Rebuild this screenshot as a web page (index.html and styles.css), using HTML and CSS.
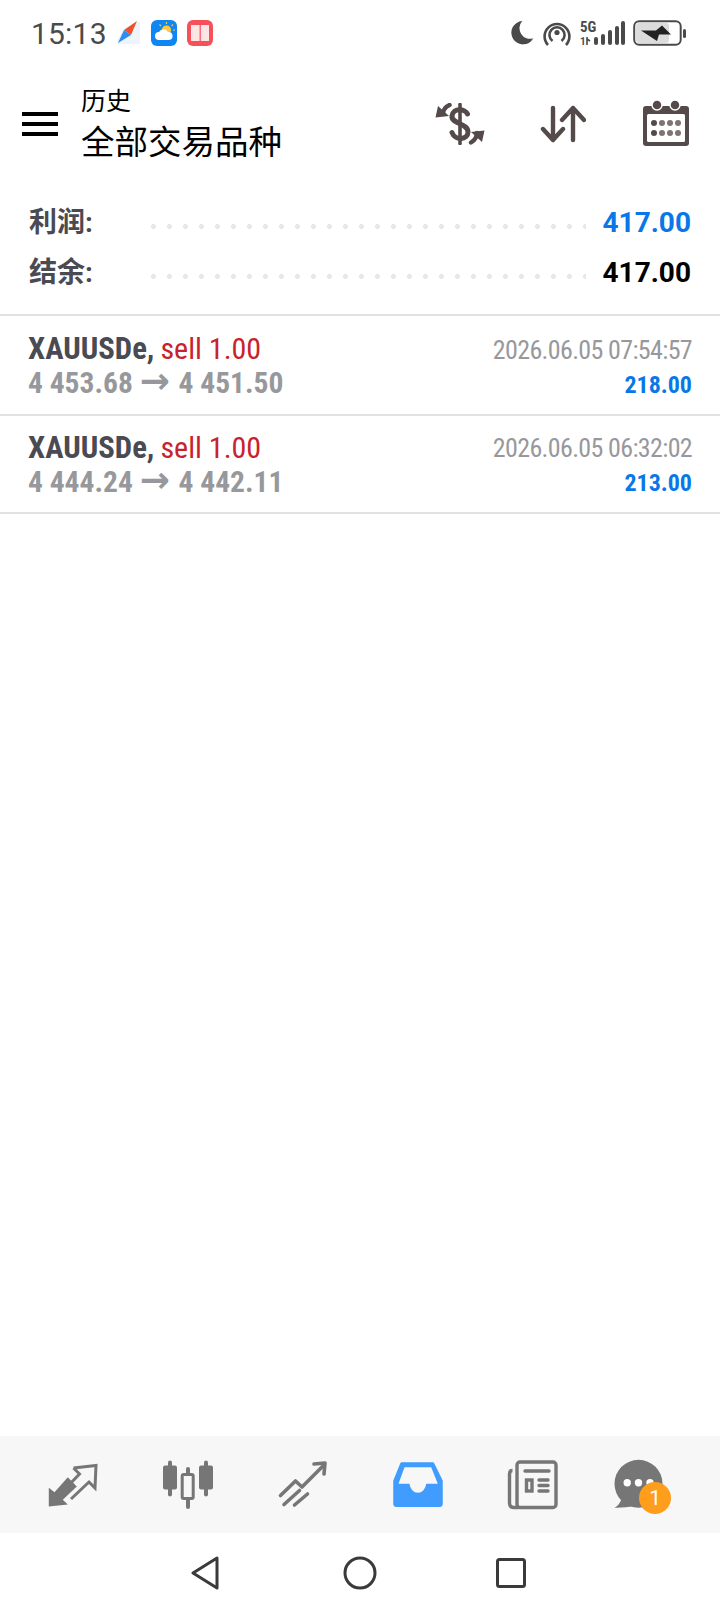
FILE: index.html
```html
<!DOCTYPE html>
<html lang="zh">
<head>
<meta charset="utf-8">
<title>历史</title>
<link rel="stylesheet" href="styles.css">
</head>
<body>
<div class="screen">
  <div class="status">
    <span class="clock">15:13</span>
    <svg class="st-app compass" viewBox="0 0 26 26"><path d="M2 24 V20 L8 10 L21 2 H25 V24Z" fill="#eef4fb"/><path d="M22 1 L16 15 L9 10Z" fill="#f0502c"/><path d="M3 23 L9 10 L16 15Z" fill="#2f8df0"/></svg>
    <svg class="st-app" viewBox="0 0 26 26"><rect width="26" height="26" rx="6" fill="#0f86f2"/><circle cx="15.5" cy="10" r="4.6" fill="#ffc93c"/><path d="M15.5 2 V4 M22 4.5 L20.6 6 M24 10 H22 M8.5 4.5 L10 6" stroke="#ffc93c" stroke-width="1.2"/><path d="M8 20 a4 4 0 0 1 0-8 a5 5 0 0 1 9 0 a4 4 0 0 1 1 8z" fill="#fff"/></svg>
    <svg class="st-app" viewBox="0 0 26 26"><rect width="26" height="26" rx="6" fill="#f5515b"/><path d="M4 5 h8.6 v16 h-8.6z M13.8 5 h8.2 v16 h-8.2z" fill="#fde4e5"/></svg>
    <span class="grow"></span>
    <svg class="st-moon" viewBox="0 0 24 24"><path d="M12.3 0 A11.7 11.7 0 1 0 23.3 17.3 A10.6 10.6 0 0 1 12.3 0Z" fill="#4a4a4a"/></svg>
    <svg class="st-hot" viewBox="0 0 28 26" fill="none" stroke="#4a4a4a" stroke-width="2.6"><circle cx="14" cy="12.5" r="2.6" fill="#4a4a4a" stroke="none"/><path d="M9.5 21 A7.6 7.6 0 1 1 18.5 21"/><path d="M5 25 A12.4 12.4 0 1 1 23 25"/></svg>
    <svg class="st-sig" viewBox="0 0 46 26"><text x="0" y="12" class="st-5g">5G</text><text x="0" y="25" class="st-1">1</text><path d="M7 25 V17 M7 19 L10 21" stroke="#4a4a4a" stroke-width="1.6" fill="none"/><g fill="#4a4a4a"><rect x="14" y="17" width="4" height="8" rx="2"/><rect x="21" y="14" width="4" height="11" rx="2"/><rect x="28" y="10" width="4" height="15" rx="2"/><rect x="35" y="6" width="4" height="19" rx="2"/><rect x="41" y="1" width="4" height="24" rx="2"/></g></svg>
    <svg class="st-bat" viewBox="0 0 54 26"><rect x="1.2" y="1.2" width="46.5" height="23.6" rx="5" fill="#fff" stroke="#4a4a4a" stroke-width="2"/><rect x="3" y="3" width="33" height="20" rx="3" fill="#dcdcdc"/><path d="M8 10.500 H23 L29 5.500 L38 14.500 H26 L24 21Z" fill="#222"/><rect x="50" y="9" width="3" height="9" rx="1.5" fill="#4a4a4a"/></svg>
  </div>

  <header class="bar">
    <div class="burger"><i></i><i></i><i></i></div>
    <div class="titles">
      <div class="t-small">历史</div>
      <div class="t-big">全部交易品种</div>
    </div>
    <svg class="ic-dollar" viewBox="0 0 50 42" fill="none" stroke="#544a4a" stroke-linecap="round"><path d="M25 1.500 V40.500" stroke-width="3.600"/><path d="M32.500 11 C30.500 6 18 4 17 13 C16 21 33 20 33 29 C33 37 20 38 17 29.500" stroke-width="5"/><path d="M14.500 2 C10 4 8 7 8 11" stroke-width="4.400"/><path d="M0.500 14.500 L14 13 L3 3Z" fill="#544a4a" stroke="none"/><path d="M36 39.500 C40 37 42 34 42 30" stroke-width="4.400"/><path d="M49.500 27.500 L36 29 L47 39Z" fill="#544a4a" stroke="none"/></svg>
    <svg class="ic-sort" viewBox="0 0 46 38" fill="none" stroke="#544a4a" stroke-width="4.4" stroke-linecap="round" stroke-linejoin="round"><path d="M13 3 V35 M3 24 L13 35 L23 24"/><path d="M33 35 V3 M22 15 L33 3 L44 15"/></svg>
    <svg class="ic-cal" viewBox="0 0 46 46"><path d="M3 6 H43 A3 3 0 0 1 46 9 V43 A3 3 0 0 1 43 46 H3 A3 3 0 0 1 0 43 V9 A3 3 0 0 1 3 6Z" fill="#544a4a"/><rect x="4" y="14" width="38" height="28" rx="1.5" fill="#fff"/><circle cx="14" cy="5" r="5" fill="#544a4a" stroke="#fff" stroke-width="1.5"/><circle cx="32" cy="5" r="5" fill="#544a4a" stroke="#fff" stroke-width="1.5"/><g fill="#544a4a"><circle cx="11" cy="23" r="3"/><circle cx="11" cy="33" r="3"/></g><g fill="#7d7474"><circle cx="19" cy="23" r="3"/><circle cx="27" cy="23" r="3"/><circle cx="35" cy="23" r="3"/><circle cx="19" cy="33" r="3"/><circle cx="27" cy="33" r="3"/><circle cx="35" cy="33" r="3"/></g></svg>
  </header>

  <section class="summary">
    <div class="sum-row"><span class="sum-label">利润:</span><span class="dots"></span><span class="sum-val blue">417.00</span></div>
    <div class="sum-row"><span class="sum-label">结余:</span><span class="dots"></span><span class="sum-val">417.00</span></div>
  </section>

  <section class="list">
    <div class="deal">
      <div class="deal-l">
        <div class="deal-top"><b class="sym">XAUUSDe,</b> <span class="side">sell 1.00</span></div>
        <div class="deal-price">4 453.68 <span class="arrow">→</span> 4 451.50</div>
      </div>
      <div class="deal-r">
        <div class="deal-date">2026.06.05 07:54:57</div>
        <div class="deal-pl">218.00</div>
      </div>
    </div>
    <div class="deal">
      <div class="deal-l">
        <div class="deal-top"><b class="sym">XAUUSDe,</b> <span class="side">sell 1.00</span></div>
        <div class="deal-price">4 444.24 <span class="arrow">→</span> 4 442.11</div>
      </div>
      <div class="deal-r">
        <div class="deal-date">2026.06.05 06:32:02</div>
        <div class="deal-pl">213.00</div>
      </div>
    </div>
  </section>

  <div class="grow"></div>

  <nav class="tabs">
    <div class="tab"><svg viewBox="0 0 60 60"><path d="M6.800 32.800 V51.500 L25.800 49.500 L20.800 44.800 L34.800 31.500 L25.800 22.200 L12.500 37.200Z" fill="#767676"/><path d="M31.500 13 L54 10.500 L53 33 L47 27 L29 44 M31.500 13 L37.500 19 L26 31" fill="none" stroke="#767676" stroke-width="3"/></svg></div>
    <div class="tab"><svg viewBox="0 0 60 60"><g fill="#767676"><rect x="6" y="10.500" width="14" height="24" rx="2"/><rect x="42" y="10.500" width="14" height="24" rx="2"/><rect x="11" y="5.500" width="4" height="36" rx="2"/><rect x="47" y="5.500" width="4" height="36" rx="2"/><rect x="29" y="12" width="4" height="42" rx="2"/></g><rect x="25.200" y="19.500" width="11" height="24" rx="1.500" fill="#f7f7f7" stroke="#767676" stroke-width="3"/></svg></div>
    <div class="tab"><svg viewBox="0 0 60 60" fill="none" stroke="#767676" stroke-width="3.600" stroke-linecap="round" stroke-linejoin="round"><path d="M8.500 40.500 L23.500 26 L30 32 L52 10"/><path d="M42 9 L53 8 L52 19"/><path d="M12 49.500 L27.500 35.500 M22.500 50 L35.500 39"/></svg></div>
    <div class="tab"><svg viewBox="0 0 60 60"><path d="M14 7.800 H46.500 L55.200 25.500 V49.500 Q55.200 51.500 53 51.500 H9 Q6.800 51.500 6.800 49.500 V25.500Z" fill="#409cff" stroke="#409cff" stroke-linejoin="round" stroke-width="1"/><path d="M17.500 12.200 H44.200 L50.800 28.800 H39.200 A8.400 10 0 0 1 22.500 28.800 H11.500Z" fill="#f7f7f7"/></svg></div>
    <div class="tab"><svg viewBox="0 0 60 60" fill="none" stroke="#767676" stroke-width="3.400"><rect x="15" y="7" width="39" height="45.500" rx="3"/><path d="M10.500 15.500 Q7.500 15.500 7.500 19 V48 Q7.500 52.500 12 52.500 H17"/><path d="M23 16 H47" stroke-linecap="round"/><rect x="24.500" y="25" width="5.500" height="11"/><path d="M37 25 H46 M37 30.500 H46 M37 36 H46" stroke-linecap="round"/></svg></div>
    <div class="tab"><svg class="chat" viewBox="0 0 60 60"><circle cx="21.500" cy="28.800" r="24" fill="#767676"/><path d="M-2.500 52.800 Q3 50 5 42 L18 51 Q8 53 -2.500 52.800Z" fill="#767676"/><g fill="#fff"><circle cx="10.200" cy="27.800" r="3.700"/><circle cx="21.500" cy="27.800" r="3.700"/><circle cx="33" cy="27.800" r="3.700"/></g></svg><span class="badge">1</span></div>
  </nav>

  <div class="sysnav">
    <svg class="nv-back" viewBox="0 0 28 34" fill="none" stroke="#3a3a3a" stroke-width="3" stroke-linejoin="round"><path d="M2 17 L26 2 V32Z"/></svg>
    <svg class="nv-home" viewBox="0 0 34 34" fill="none" stroke="#3a3a3a" stroke-width="3"><circle cx="17" cy="17" r="15"/></svg>
    <svg class="nv-rec" viewBox="0 0 30 30" fill="none" stroke="#3a3a3a" stroke-width="3"><rect x="1.500" y="1.500" width="27" height="27" rx="2"/></svg>
  </div>
</div>
</body>
</html>
```

FILE: styles.css
```css
* { box-sizing: border-box; }
html, body { margin: 0; padding: 0; background: #fff; }
.screen {
  width: 720px; height: 1612px; display: flex; flex-direction: column;
  font-family: Roboto, "Noto Sans CJK SC", sans-serif; overflow: hidden;
}
.grow { flex: 1; }
.status { height: 68px; display: flex; align-items: center; padding: 0 34px 2px 31px; }
.clock { font-size: 30px; color: #4a4a4a; margin-right: 9px; width: 75px; letter-spacing: 0.2px; }
.st-app { width: 26px; height: 26px; margin-right: 10px; }
.st-moon { width: 24px; height: 24px; margin-right: 9px; }
.st-hot { width: 28px; height: 26px; margin-right: 9px; }
.st-sig { width: 46px; height: 26px; margin-right: 7px; overflow: visible; }
.st-5g { font: bold 15px "Roboto Condensed", Roboto, sans-serif; font-stretch: 75%; fill: #4a4a4a; }
.st-1 { font: bold 10px Roboto, sans-serif; fill: #4a4a4a; }
.st-bat { width: 54px; height: 26px; margin-right: -1px; }

.bar { height: 108px; display: flex; align-items: center; padding: 4px 31px 0 22px; }
.burger { width: 36px; display: flex; flex-direction: column; gap: 5.5px; margin-right: 23px; }
.burger i { display: block; height: 4.5px; background: #000; }
.titles { flex: 1; font-family: "Noto Sans CJK SC", sans-serif; color: #000; padding: 1px 0 1px; }
.t-small { font-size: 25px; line-height: 31px; }
.t-big { font-size: 33.5px; line-height: 50px; }
.ic-dollar { width: 50px; height: 42px; margin-right: 55px; }
.ic-sort { width: 46px; height: 38px; margin-right: 57px; }
.ic-cal { width: 46px; height: 46px; margin-bottom: 2px; }

.summary { padding: 21px 29px 0 29px; height: 138px; }
.sum-row { height: 50px; display: flex; align-items: center; }
.sum-label { font: bold 28px Roboto, "Noto Sans CJK SC", sans-serif; color: #4a4a52; width: 122px; padding-bottom: 4px; }
.dots {
  flex: 1; height: 5px; margin-top: 8px; margin-right: 17px;
  background: radial-gradient(circle at 2.5px 2.5px, #e8e8e8 2.5px, transparent 2.8px) 0 0 / 16px 5px repeat-x;
}
.sum-val { font-size: 28px; font-weight: 700; color: #000; }
.sum-val.blue { color: #0a77e8; }

.list { border-top: 2px solid #e2e2e2; }
.deal {
  height: 98px; border-bottom: 2px solid #e2e2e2; display: flex; justify-content: space-between;
  padding: 14.5px 28px 0 28px;
}
.deal:first-child { height: 100px; padding-top: 16px; }
.deal-top, .deal-price, .deal-date, .deal-pl { font-family: "Roboto Condensed", Roboto, sans-serif; font-stretch: 75%; }
.deal-top { font-size: 30.7px; line-height: 34px; }
.sym { color: #4a4a52; font-weight: 700; margin-right: -1px; }
.side { color: #c8232c; font-size: 30px; }
.deal-price { font-size: 29.5px; line-height: 34px; font-weight: 700; color: #97989c; }
.arrow { font: bold 36px "DejaVu Sans", sans-serif; line-height: 30px; margin-right: 2px; }
.deal-r { text-align: right; padding-top: 1px; }
.deal + .deal .deal-r { padding-top: 0; }
.deal-date { font-size: 26px; letter-spacing: -0.65px; line-height: 35px; color: #98989c; }
.deal-pl { font-size: 24px; line-height: 34px; font-weight: 700; color: #0a77e8; }

.tabs { height: 97px; background: #f7f7f7; display: flex; padding: 0 16px 0 15px; }
.tab { flex: 1; display: flex; align-items: center; justify-content: center; position: relative; }
.tab svg { width: 60px; height: 60px; }
.tab svg.chat { overflow: visible; }
.badge {
  position: absolute; left: 50px; top: 46px; width: 32px; height: 32px; border-radius: 50%;
  background: #ff9d1c; color: #fff; font-size: 21px; line-height: 32px; text-align: center;
}
.sysnav { height: 79px; display: flex; align-items: center; padding: 0 0 0 191px; }
.nv-back { width: 28px; height: 34px; margin-right: 124px; }
.nv-home { width: 34px; height: 34px; margin-right: 119px; }
.nv-rec { width: 30px; height: 30px; }
```
